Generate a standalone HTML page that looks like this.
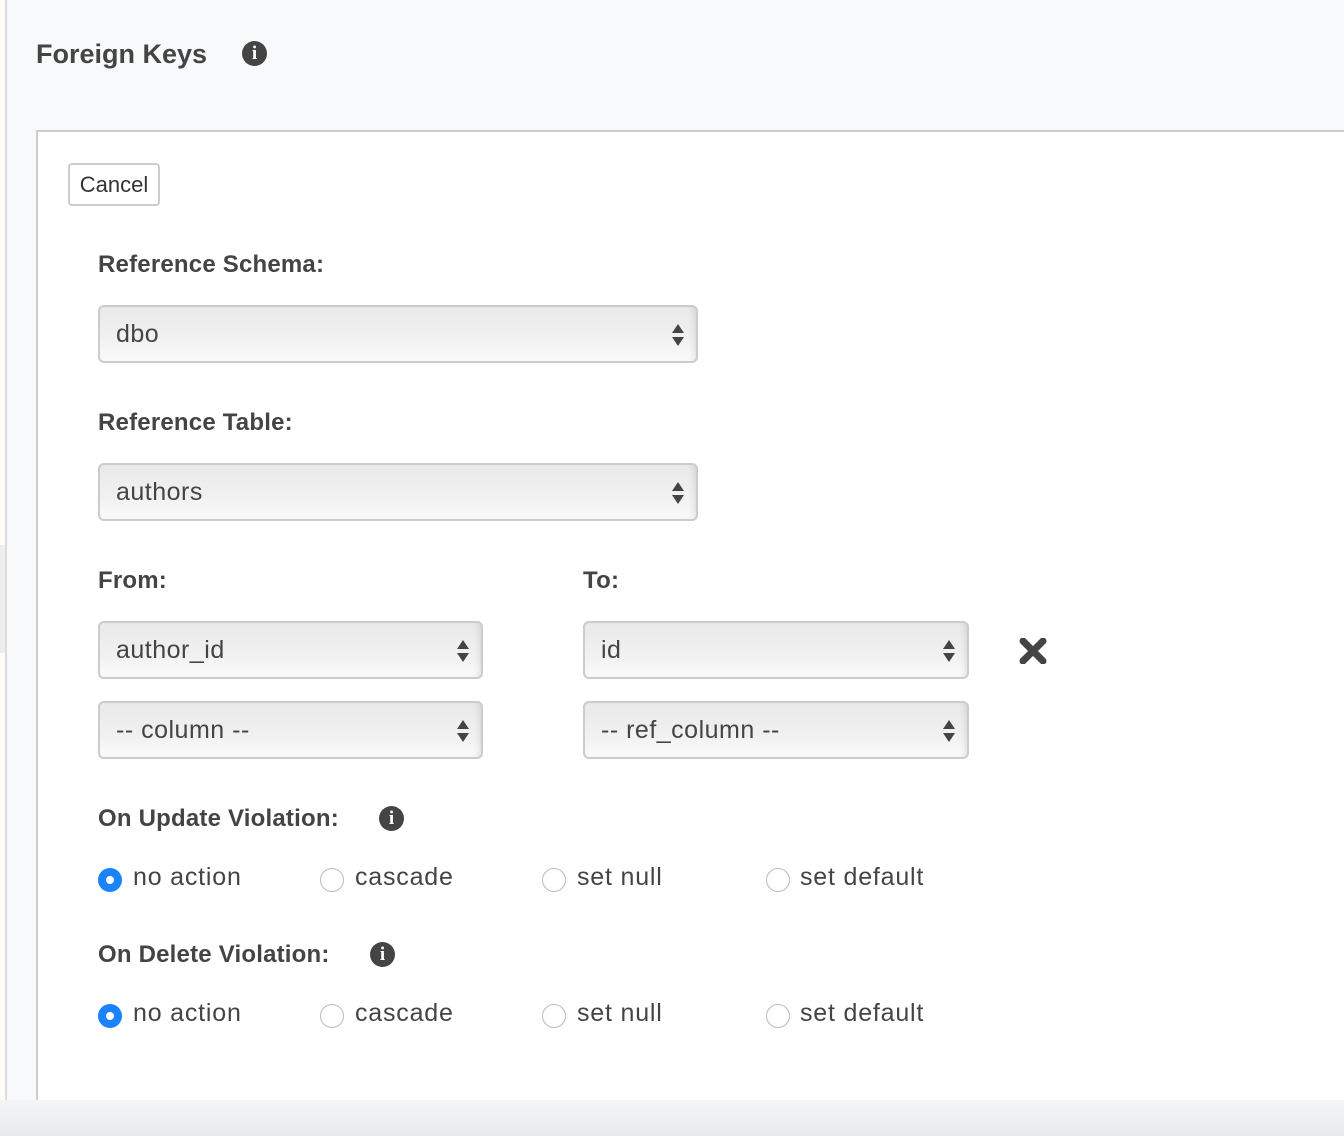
<!DOCTYPE html>
<html><head><style>
*{box-sizing:border-box;margin:0;padding:0}
body{width:1344px;height:1136px;overflow:hidden;background:#f8f9fa;font-family:"Liberation Sans",sans-serif;color:#444;position:relative}
.abs{position:absolute}
.lbl{position:absolute;font-weight:bold;font-size:24px;color:#444;letter-spacing:0.2px}
.sel{position:absolute;height:58px;border:2px solid #ccc;border-radius:6px;background:linear-gradient(#e9e9e9,#f1f1f1 60%,#fafafa);box-shadow:inset -6px 0 8px -6px rgba(0,0,0,.15);font-size:25px;color:#444;padding-left:16px;line-height:54px;letter-spacing:0.5px}
.arr{position:absolute;right:11px;top:16px;width:14px;height:24px}
.info{position:absolute;width:25px;height:25px;border-radius:50%;background:#444;color:#fff;font:bold 19px "Liberation Serif",serif;text-align:center;line-height:25px}
.rad{position:absolute;width:24px;height:24px;border-radius:50%;border:1px solid #bbb;background:#fff}
.rad.on{background:#1a82fb;border:none}
.rad.on::after{content:"";position:absolute;left:8px;top:8px;width:8px;height:8px;border-radius:50%;background:#fff}
.rt{position:absolute;font-size:25px;color:#444;letter-spacing:0.8px}
</style></head><body>
<div class="abs" style="left:0;top:0;width:5px;height:1136px;background:#fffdf5"></div>
<div class="abs" style="left:5px;top:0;width:2px;height:1136px;background:#ddd"></div>
<div class="abs" style="left:0;top:545px;width:5px;height:108px;background:#eee"></div>
<div class="abs" style="left:36px;top:54px;font-weight:bold;font-size:27px;line-height:0;color:#444">Foreign Keys</div>
<div class="info" style="left:242px;top:41px">i</div>
<div class="abs" style="left:36px;top:130px;width:1310px;height:970px;background:#fff;border-left:2px solid #ccc;border-top:2px solid #ccc"></div>
<div class="abs" style="left:0;top:1100px;width:1344px;height:36px;background:linear-gradient(#f4f5f6,#e9eaeb)"></div>
<div class="abs" style="left:68px;top:163px;width:92px;height:43px;border:2px solid #ccc;border-radius:4px;background:#fff;font-size:22px;line-height:39px;text-align:center;color:#333">Cancel</div>

<div class="lbl" style="left:98px;top:251px">Reference Schema:</div>
<div class="sel" style="left:98px;top:305px;width:600px">dbo<svg class="arr" viewBox="0 0 14 24"><path d="M7 1L13 10H1Z M7 23L13 14H1Z" fill="#444"/></svg></div>
<div class="lbl" style="left:98px;top:409px">Reference Table:</div>
<div class="sel" style="left:98px;top:463px;width:600px">authors<svg class="arr" viewBox="0 0 14 24"><path d="M7 1L13 10H1Z M7 23L13 14H1Z" fill="#444"/></svg></div>
<div class="lbl" style="left:98px;top:567px">From:</div>
<div class="lbl" style="left:583px;top:567px">To:</div>
<div class="sel" style="left:98px;top:621px;width:385px">author_id<svg class="arr" viewBox="0 0 14 24"><path d="M7 1L13 10H1Z M7 23L13 14H1Z" fill="#444"/></svg></div>
<div class="sel" style="left:583px;top:621px;width:386px">id<svg class="arr" viewBox="0 0 14 24"><path d="M7 1L13 10H1Z M7 23L13 14H1Z" fill="#444"/></svg></div>
<div class="sel" style="left:98px;top:701px;width:385px">-- column --<svg class="arr" viewBox="0 0 14 24"><path d="M7 1L13 10H1Z M7 23L13 14H1Z" fill="#444"/></svg></div>
<div class="sel" style="left:583px;top:701px;width:386px">-- ref_column --<svg class="arr" viewBox="0 0 14 24"><path d="M7 1L13 10H1Z M7 23L13 14H1Z" fill="#444"/></svg></div>
<svg class="abs" style="left:1019px;top:638px" width="28" height="26" viewBox="0 0 28 26"><path d="M4 3L24 23M24 3L4 23" stroke="#444" stroke-width="7" stroke-linecap="round"/></svg>

<div class="lbl" style="left:98px;top:805px">On Update Violation:</div>
<div class="info" style="left:379px;top:806px">i</div>
<div class="rad on" style="left:98px;top:868px"></div><div class="rt" style="left:133px;top:863px">no action</div>
<div class="rad" style="left:320px;top:868px"></div><div class="rt" style="left:355px;top:863px">cascade</div>
<div class="rad" style="left:542px;top:868px"></div><div class="rt" style="left:577px;top:863px">set null</div>
<div class="rad" style="left:766px;top:868px"></div><div class="rt" style="left:800px;top:863px">set default</div>

<div class="lbl" style="left:98px;top:941px">On Delete Violation:</div>
<div class="info" style="left:370px;top:942px">i</div>
<div class="rad on" style="left:98px;top:1004px"></div><div class="rt" style="left:133px;top:999px">no action</div>
<div class="rad" style="left:320px;top:1004px"></div><div class="rt" style="left:355px;top:999px">cascade</div>
<div class="rad" style="left:542px;top:1004px"></div><div class="rt" style="left:577px;top:999px">set null</div>
<div class="rad" style="left:766px;top:1004px"></div><div class="rt" style="left:800px;top:999px">set default</div>
</body></html>
